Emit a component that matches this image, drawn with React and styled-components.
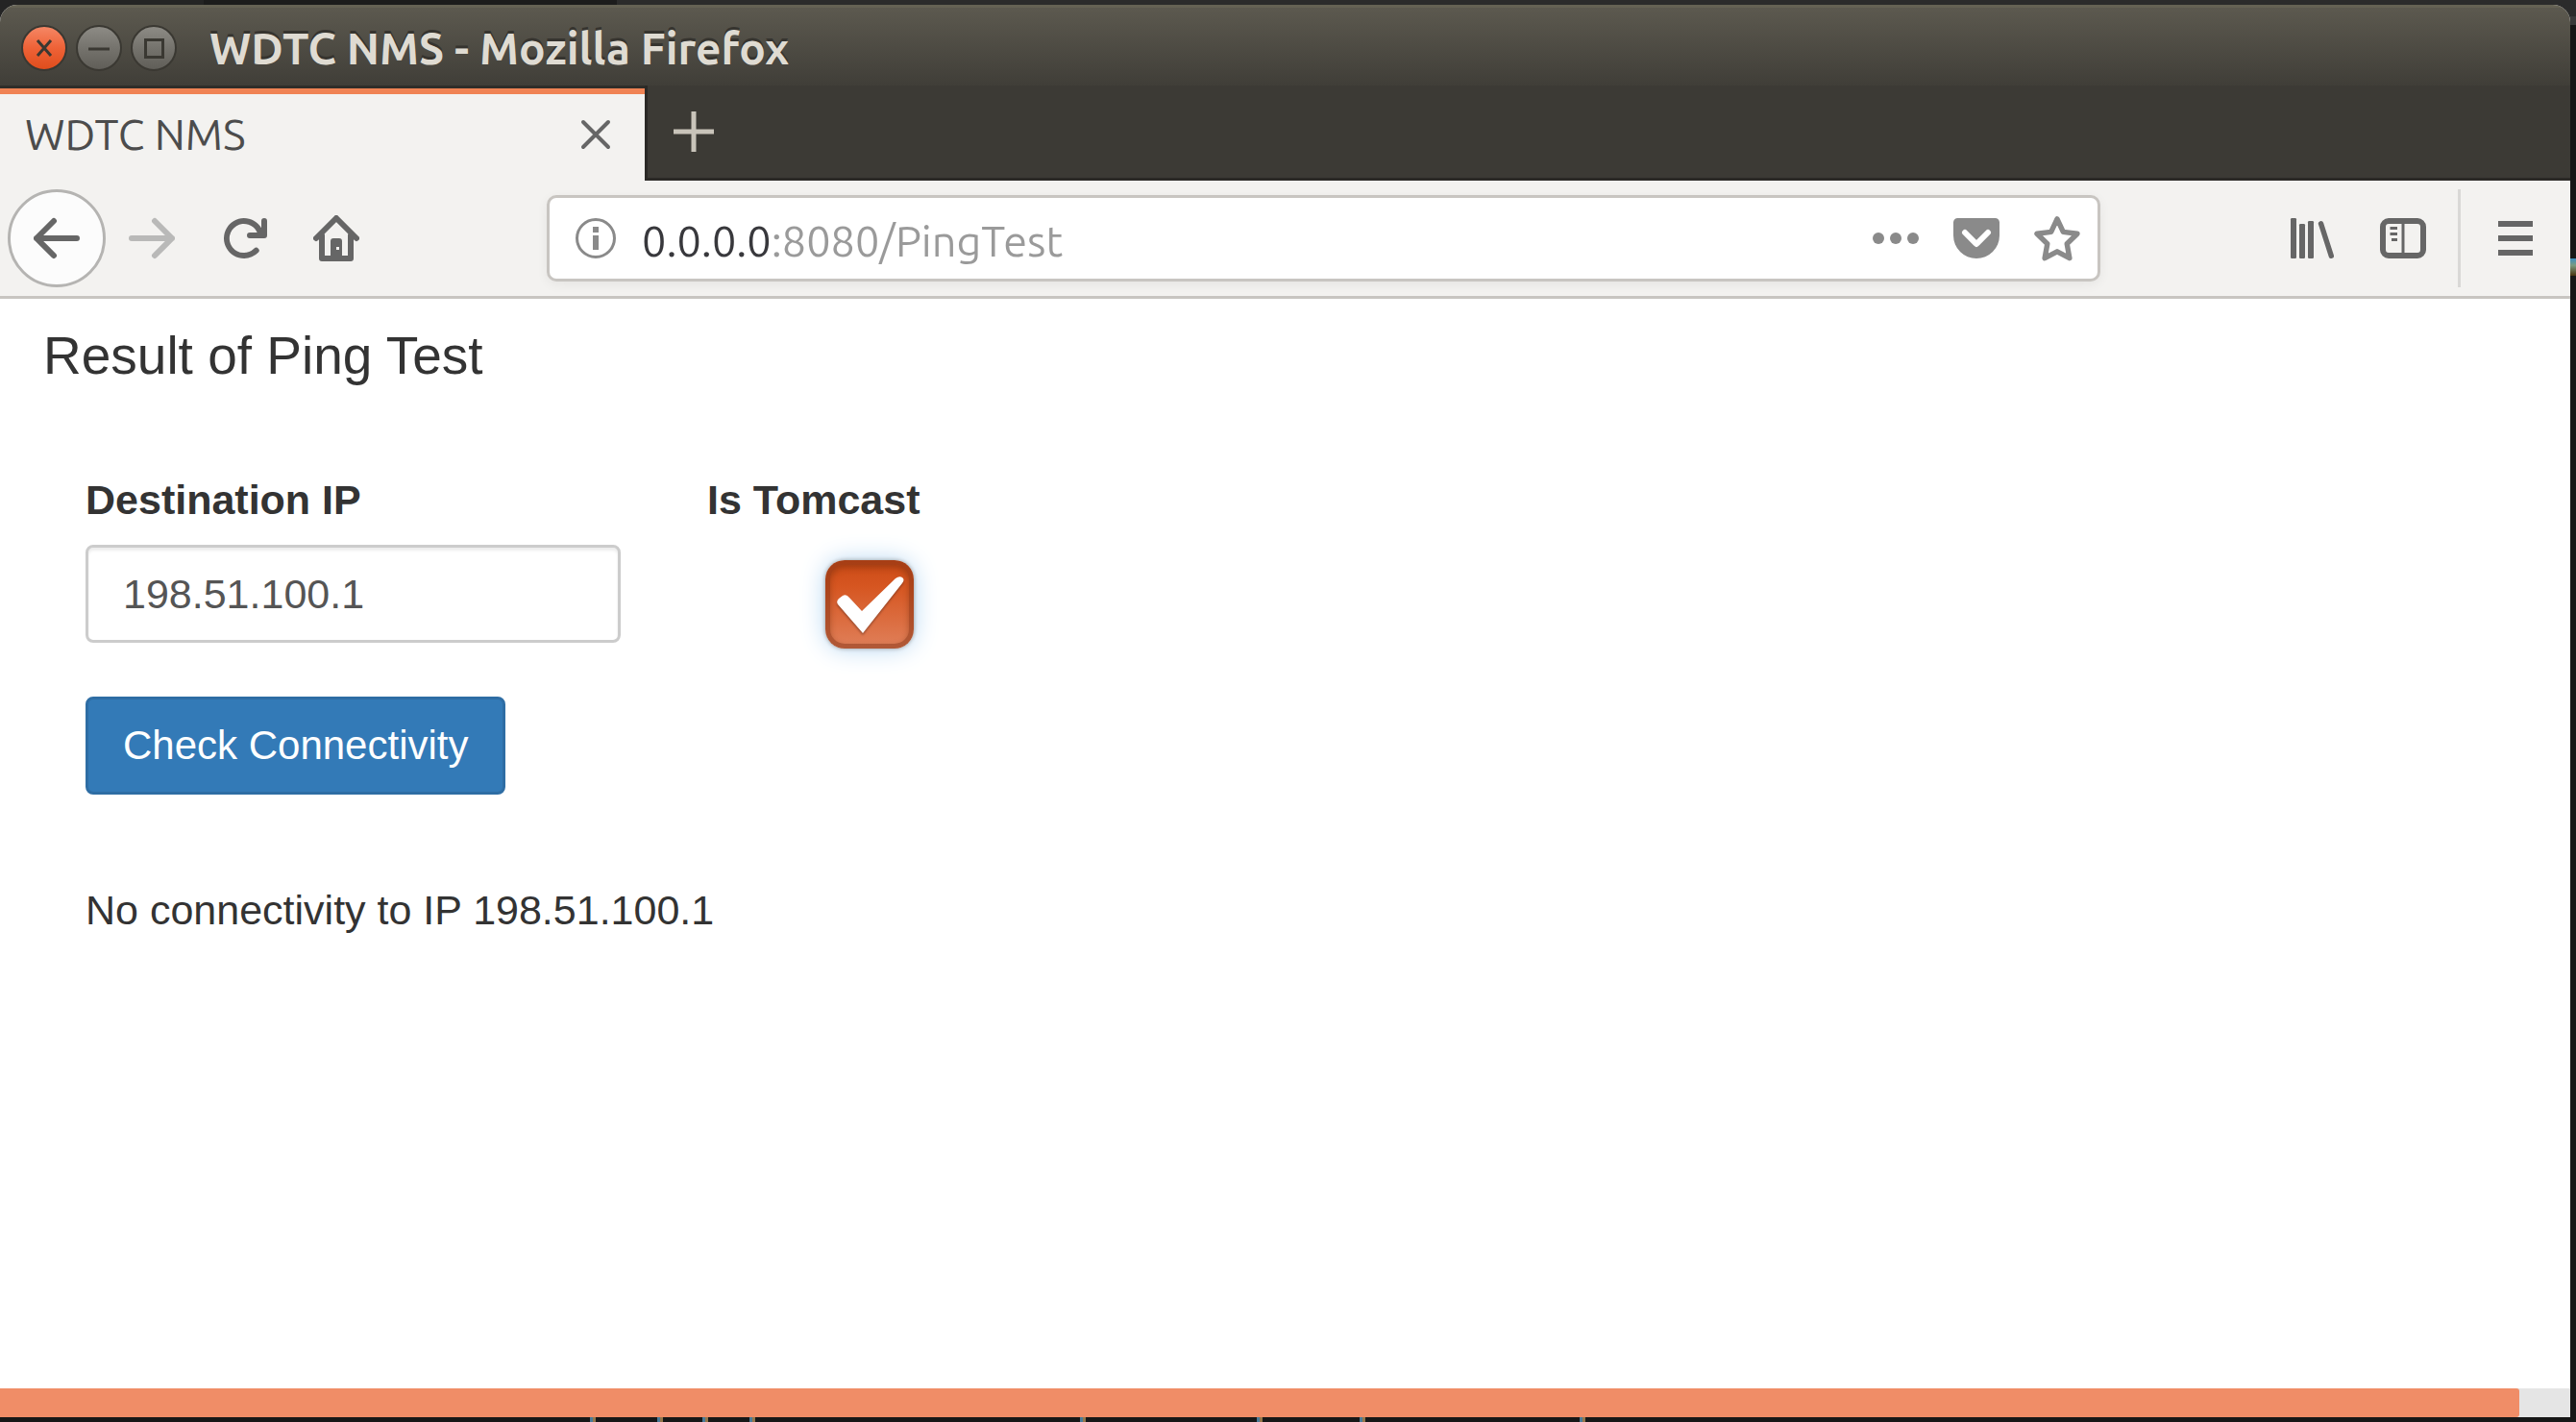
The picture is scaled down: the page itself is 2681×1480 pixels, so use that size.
import React, { useState } from "react";
import styled, { createGlobalStyle } from "styled-components";

const GlobalStyle = createGlobalStyle`
  *, *::before, *::after { box-sizing: border-box; }
  body { margin: 0; background: #171717; }
  button, input { font: inherit; margin: 0; }
`;

const uiFont = `Ubuntu, "Open Sans", sans-serif`;
const pageFont = `"Liberation Sans", Arial, sans-serif`;

const Desktop = styled.div`
  position: relative;
  display: flex;
  min-height: 100vh;
  padding: 5px 6px 5px 0;
  background:
    linear-gradient(90deg, #242424 212px, #1c1c1c 212px 642px, #2b2b2b 642px) top / 100% 17px no-repeat,
    linear-gradient(#3d8fc0, #7a9a80 40%, #4a3410) right 269px / 6px 18px no-repeat,
    linear-gradient(#3a3a3a, #3a3a3a) 0 17px / 100% 9px no-repeat,
    #171717;
`;

const TerminalEdge = styled.svg`
  position: absolute;
  left: 0;
  bottom: 0;
`;

const Window = styled.div`
  flex: 1;
  display: flex;
  flex-direction: column;
  min-width: 0;
  border-radius: 18px 18px 0 0;
  overflow: hidden;
  background: #fff;
`;

const TitleBar = styled.header`
  display: flex;
  align-items: center;
  gap: 9px;
  height: 84px;
  padding: 3px 22px 0;
  border-top: 3px solid #656254;
  background: linear-gradient(#5c594f, #403e38);
`;

const WindowButton = styled.button`
  display: flex;
  align-items: center;
  justify-content: center;
  width: 48px;
  height: 48px;
  padding: 0;
  border: 2px solid #3a3832;
  border-radius: 50%;
  color: #3a3832;
  background: ${(p) =>
    p.$close
      ? "linear-gradient(#f58765, #ee6237 50%, #e04d1c)"
      : "linear-gradient(#8d8b85, #75736d 50%, #605e58)"};
`;

const WindowTitle = styled.h1`
  margin: 0 0 0 25px;
  font: 700 46px/60px ${uiFont};
  color: #dfdbd2;
  text-shadow: 0 -3px 0 #36342f;
  white-space: nowrap;
`;

const TabStrip = styled.nav`
  display: flex;
  height: 99px;
  background: #3c3a35;
  box-shadow: inset 0 -3px 0 #2b2926;
`;

const Tab = styled.div`
  display: flex;
  align-items: center;
  justify-content: space-between;
  width: 674px;
  padding: 9px 30px 6px 26px;
  border-right: 3px solid #2b2926;
  background: linear-gradient(#2f2d29 3px, #f08354 3px 9px, #f3f2f0 9px);
  font: 400 45px/60px ${uiFont};
  color: #4c4c4c;
`;

const IconButton = styled.button`
  display: flex;
  align-items: center;
  justify-content: center;
  flex: none;
  padding: 0;
  border: 0;
  background: none;
  color: ${(p) => p.$color || "#666"};
`;

const NewTabButton = styled(IconButton)`
  width: 96px;
  height: 96px;
`;

const ToolBar = styled.div`
  display: flex;
  align-items: center;
  gap: 48px;
  height: 123px;
  padding: 0 33px 0 8px;
  border-bottom: 3px solid #c8c5c1;
  background: #f3f2f0;
`;

const History = styled.div`
  display: flex;
  align-items: center;
  gap: 24px;
`;

const BackButton = styled(IconButton)`
  width: 102px;
  height: 102px;
  border: 3px solid #b5b4b2;
  border-radius: 50%;
  background: #fcfcfc;
`;

const UrlBar = styled.div`
  flex: 1;
  display: flex;
  align-items: center;
  min-width: 0;
  height: 90px;
  margin: 0 147px;
  padding: 0 18px 0 24px;
  border: 3px solid #c8c5c1;
  border-radius: 10px;
  background: #fff;
  box-shadow: 0 3px 12px rgba(0, 0, 0, 0.06);
`;

const UrlInput = styled.input`
  flex: 1;
  min-width: 0;
  height: 66px;
  margin: 0 24px;
  padding: 4px 0 0;
  border: 0;
  outline: 0;
  font: 400 45px/60px ${uiFont};
  color: #9a9a9a;
  background: linear-gradient(90deg, #38383c 136px, #9a9a9a 136px);
  -webkit-background-clip: text;
  background-clip: text;
  -webkit-text-fill-color: transparent;
`;

const PageActions = styled.div`
  display: flex;
  gap: 36px;
`;

const MenuArea = styled.div`
  display: flex;
  align-items: center;
  height: 102px;
  padding-left: 33px;
  margin-left: -15px;
  border-left: 3px solid #d9d8d6;
`;

const Page = styled.main`
  flex: 1;
  padding: 29px 45px;
  font: 400 43px/60px ${pageFont};
  color: #333;
`;

const Heading = styled.h2`
  margin: 0 0 90px;
  font-size: 55px;
  line-height: 60px;
  font-weight: 400;
`;

const PingForm = styled.form`
  padding-left: 44px;
`;

const FieldRow = styled.div`
  display: flex;
  gap: 90px;
  margin-bottom: 50px;
`;

const Field = styled.div`
  display: flex;
  flex-direction: column;
  width: ${(p) => p.$width};
`;

const FieldLabel = styled.label`
  margin-bottom: 17px;
  font-weight: 700;
`;

const TextInput = styled.input`
  width: 100%;
  height: 102px;
  padding: 0 36px;
  border: 3px solid #ccc;
  border-radius: 8px;
  color: #555;
  background: #fff;
  box-shadow: inset 0 3px 3px rgba(0, 0, 0, 0.075);
`;

const CheckHolder = styled.div`
  position: relative;
  width: 92px;
  height: 92px;
  margin: 16px 0 0 123px;
`;

const CheckBox = styled.input`
  appearance: none;
  display: block;
  width: 92px;
  height: 92px;
  border: 5px solid rgba(130, 50, 20, 0.5);
  border-radius: 20px;
  background: linear-gradient(#cb4a16, #d65621 30%, #e0805a) border-box;
  box-shadow:
    0 0 4px #9a9a9a,
    0 0 26px #b5d6f2,
    inset 0 3px 6px rgba(100, 40, 10, 0.4);
`;

const CheckMark = styled.svg`
  position: absolute;
  inset: 0;
  pointer-events: none;
  filter: drop-shadow(0 2px 1px rgba(110, 50, 30, 0.6));
`;

const SubmitButton = styled.button`
  display: block;
  height: 102px;
  padding: 0 36px;
  border: 3px solid #2e6da4;
  border-radius: 8px;
  font-size: 42px;
  color: #fff;
  background: #337ab7;
`;

const Result = styled.p`
  margin: 90px 0 0 44px;
`;

const ScrollTrack = styled.div`
  height: 30px;
  background: #e5e5e5;
`;

const ScrollThumb = styled.div`
  width: 98%;
  height: 100%;
  border-radius: 0 3px 3px 0;
  background: #f08d67;
`;

function Icon({ size = 48, children }) {
  return (
    <svg width={size} height={size} viewBox="0 0 16 16" fill="none" aria-hidden="true">
      {children}
    </svg>
  );
}

const line = { stroke: "currentColor", strokeWidth: 2, strokeLinecap: "round", strokeLinejoin: "round" };

const BackIcon = () => (
  <Icon><path {...line} d="M7 2L1 8l6 6M1 8h14" /></Icon>
);
const ForwardIcon = () => (
  <Icon><path {...line} d="M9 2l6 6-6 6M15 8H1" /></Icon>
);
const ReloadIcon = () => (
  <Icon>
    <path
      fill="currentColor"
      d="M15 1a1 1 0 0 0-1 1v2.418A6.995 6.995 0 1 0 8 15a6.954 6.954 0 0 0 4.95-2.05 1 1 0 0 0-1.414-1.414A5.019 5.019 0 1 1 12.549 6H10a1 1 0 0 0 0 2h5a1 1 0 0 0 1-1V2a1 1 0 0 0-1-1z"
    />
  </Icon>
);
const HomeIcon = () => (
  <Icon>
    <path {...line} d="M1 8l7-7 7 7M3 7v8h10V7" />
    <path fill="currentColor" d="M6 9a1 1 0 0 1 1-1h2a1 1 0 0 1 1 1v6H6z" />
    <path fill="#f3f2f0" d="M8 11h1v1H8z" />
  </Icon>
);
const InfoIcon = () => (
  <Icon>
    <circle cx="8" cy="8" r="6.5" stroke="currentColor" />
    <path fill="currentColor" d="M7 4h2v2H7zM7 7h2v5H7z" />
  </Icon>
);
const DotsIcon = () => (
  <Icon>
    <g fill="currentColor">
      <circle cx="2" cy="8" r="2" /><circle cx="8" cy="8" r="2" /><circle cx="14" cy="8" r="2" />
    </g>
  </Icon>
);
const PocketIcon = () => (
  <Icon>
    <path fill="currentColor" d="M1.500 1h13A1.500 1.500 0 0 1 16 2.500V7A8 8 0 0 1 0 7V2.500A1.500 1.500 0 0 1 1.500 1z" />
    <path {...line} stroke="#fff" d="M4 6l4 4 4-4" />
  </Icon>
);
const StarIcon = () => (
  <Icon>
    <path
      {...line}
      strokeWidth="1.800"
      d="M8 1.300l2.100 4.500 4.900.6-3.600 3.500.9 5L8 12.600 3.700 14.900l.9-5L1 6.400l4.900-.6z"
    />
  </Icon>
);
const LibraryIcon = () => (
  <Icon>
    <g fill="currentColor">
      <rect x="1" y="1" width="2" height="14" rx=".4" />
      <rect x="4" y="3" width="2" height="12" rx=".4" />
      <rect x="7" y="2" width="2" height="13" rx=".4" />
    </g>
    <path stroke="currentColor" strokeWidth="1.800" strokeLinecap="round" d="M11.500 2.900l3.600 11.200" />
  </Icon>
);
const SidebarIcon = () => (
  <Icon>
    <rect {...line} x="1" y="2" width="14" height="12" rx="2" />
    <path stroke="currentColor" d="M8 2v12M3.500 4.500H6M3.500 6.500H6M4 8.500h2" />
  </Icon>
);
const MenuIcon = () => (
  <Icon><path stroke="currentColor" strokeWidth="2" d="M2 3h12M2 8h12M2 13h12" /></Icon>
);

const terminalStrokes = [614, 684, 731, 780, 1124, 1308, 1415, 1644];

export default function App() {
  const [url, setUrl] = useState("0.0.0.0:8080/PingTest");
  const [ip, setIp] = useState("198.51.100.1");
  const [tomcast, setTomcast] = useState(true);

  return (
    <Desktop>
      <GlobalStyle />
      <Window>
        <TitleBar>
          <WindowButton $close aria-label="Close window">
            <svg width="18" height="20" viewBox="0 0 18 20" stroke="currentColor" strokeWidth="3"><path d="M2 2l14 16M16 2L2 18" /></svg>
          </WindowButton>
          <WindowButton aria-label="Minimize window">
            <svg width="22" height="22" viewBox="0 0 22 22" stroke="currentColor" strokeWidth="3"><path d="M0 12h22" /></svg>
          </WindowButton>
          <WindowButton aria-label="Maximize window">
            <svg width="21" height="21" viewBox="0 0 21 21" fill="none" stroke="currentColor" strokeWidth="3"><path d="M1.500 1.500h18v18h-18z" /></svg>
          </WindowButton>
          <WindowTitle>WDTC NMS - Mozilla Firefox</WindowTitle>
        </TitleBar>

        <TabStrip>
          <Tab>
            WDTC NMS
            <IconButton aria-label="Close tab">
              <svg width="42" height="42" viewBox="0 0 42 42" stroke="currentColor" strokeWidth="4" strokeLinecap="round"><path d="M8 8l26 26M34 8L8 34" /></svg>
            </IconButton>
          </Tab>
          <NewTabButton $color="#c9c4ba" aria-label="New tab">
            <svg width="42" height="42" viewBox="0 0 42 42" stroke="currentColor" strokeWidth="5"><path d="M21 0v42M0 21h42" /></svg>
          </NewTabButton>
        </TabStrip>

        <ToolBar>
          <History>
            <BackButton aria-label="Back"><BackIcon /></BackButton>
            <IconButton $color="#b9b9b8" aria-label="Forward"><ForwardIcon /></IconButton>
          </History>
          <IconButton aria-label="Reload"><ReloadIcon /></IconButton>
          <IconButton aria-label="Home"><HomeIcon /></IconButton>
          <UrlBar>
            <IconButton $color="#8a8a8a" aria-label="Site information"><InfoIcon /></IconButton>
            <UrlInput aria-label="Address" value={url} onChange={(e) => setUrl(e.target.value)} />
            <PageActions>
              <IconButton $color="#8a8a8a" aria-label="Page actions"><DotsIcon /></IconButton>
              <IconButton $color="#8a8a8a" aria-label="Save to Pocket"><PocketIcon /></IconButton>
              <IconButton $color="#8a8a8a" aria-label="Bookmark"><StarIcon /></IconButton>
            </PageActions>
          </UrlBar>
          <IconButton aria-label="Library"><LibraryIcon /></IconButton>
          <IconButton aria-label="Sidebars"><SidebarIcon /></IconButton>
          <MenuArea>
            <IconButton aria-label="Menu"><MenuIcon /></IconButton>
          </MenuArea>
        </ToolBar>

        <Page>
          <Heading>Result of Ping Test</Heading>
          <PingForm onSubmit={(e) => e.preventDefault()}>
            <FieldRow>
              <Field $width="557px">
                <FieldLabel htmlFor="ip">Destination IP</FieldLabel>
                <TextInput id="ip" value={ip} onChange={(e) => setIp(e.target.value)} />
              </Field>
              <Field>
                <FieldLabel htmlFor="tomcast">Is Tomcast</FieldLabel>
                <CheckHolder>
                  <CheckBox
                    id="tomcast"
                    type="checkbox"
                    checked={tomcast}
                    onChange={(e) => setTomcast(e.target.checked)}
                  />
                  {tomcast && (
                    <CheckMark width="92" height="92" viewBox="0 0 92 92" aria-hidden="true">
                      <path fill="#fff" d="M13 46q-2-3 1-6l4-3q4-2 7 2l13 14L73 19q4-3 7-1t0 6L39 76z" />
                    </CheckMark>
                  )}
                </CheckHolder>
              </Field>
            </FieldRow>
            <SubmitButton type="submit">Check Connectivity</SubmitButton>
          </PingForm>
          <Result>No connectivity to IP 198.51.100.1</Result>
        </Page>

        <ScrollTrack>
          <ScrollThumb />
        </ScrollTrack>
      </Window>
      <TerminalEdge width="1660" height="5" viewBox="0 0 1660 5" aria-hidden="true">
        {terminalStrokes.map((x) => (
          <g key={x}>
            <path fill="#4a7a98" d={`M${x} 0h3v5h-3z`} />
            <path fill="#94764a" d={`M${x + 3} 0h3v5h-3z`} />
          </g>
        ))}
      </TerminalEdge>
    </Desktop>
  );
}
